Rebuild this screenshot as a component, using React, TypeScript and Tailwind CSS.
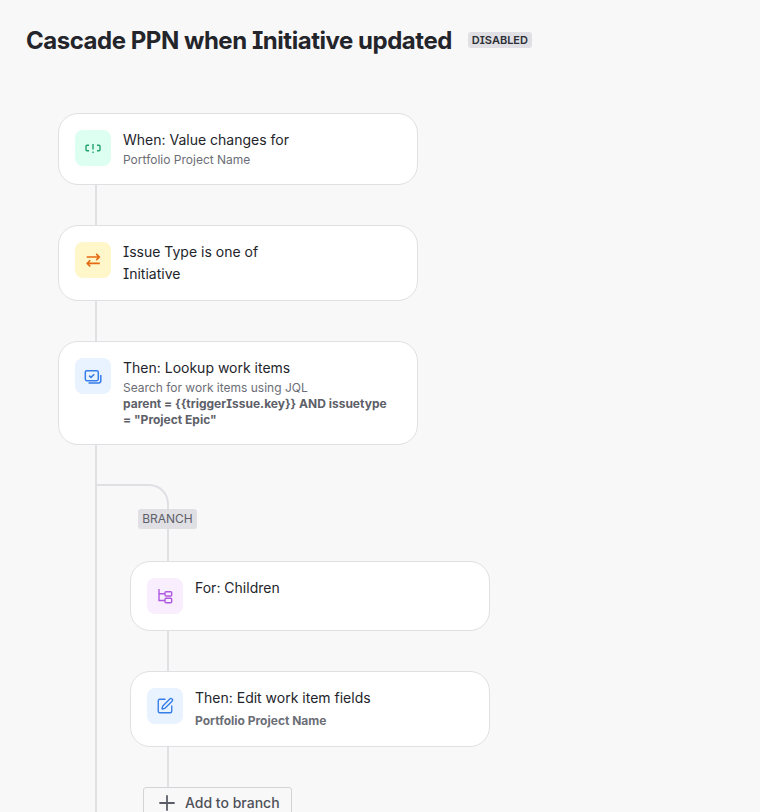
import React from "react";
import { SquarePen, Plus } from "lucide-react";

const font = { fontFamily: "Inter, 'Noto Sans', sans-serif" };

function Conn({ ml, h = "h-10" }: { ml: string; h?: string }) {
  return <div className={`w-0.5 bg-[#dfdfe4] ${ml} ${h}`} />;
}

function Card({ icon, bg, h, title, children }: { icon: React.ReactNode; bg: string; h: string; title: string; children?: React.ReactNode }) {
  return (
    <div className={`w-[360px] ${h} bg-white border border-[#e0e0e4] rounded-[20px] pl-4 pr-6 pt-4 flex gap-3`}>
      <div className={`w-9 h-9 rounded-lg ${bg} flex items-center justify-center shrink-0`}>{icon}</div>
      <div className="flex-1 min-w-0">
        <div className="text-sm leading-5 text-[#23252b]">{title}</div>
        {children}
      </div>
    </div>
  );
}

const WhenIcon = () => (
  <svg width="18" height="18" viewBox="0 0 18 18" fill="none" stroke="#22a06b" strokeWidth="1.4">
    <path d="M5 6.2H3a1 1 0 0 0-1 1v3.6a1 1 0 0 0 1 1h2" />
    <path d="M13 6.2h2a1 1 0 0 1 1 1v3.6a1 1 0 0 1-1 1h-2" />
    <path d="M9 5v5.6M9 12.4v1.6" />
  </svg>
);

const SwapIcon = () => (
  <svg width="18" height="18" viewBox="0 0 18 18" fill="none" stroke="#e56910" strokeWidth="1.6">
    <path d="M2.7 6h12.6M12.2 2.9L15.3 6l-3.1 3.1" />
    <path d="M15.8 12.4H3.2M6.3 9.3L3.2 12.4l3.1 3.1" />
  </svg>
);

const LookupIcon = () => (
  <svg width="18" height="18" viewBox="0 0 18 18" fill="none" stroke="#357de8" strokeWidth="1.5">
    <rect x="1.3" y="3.7" width="13" height="10" rx="1.6" />
    <path d="M5.2 8.6l1.8 1.8 3.2-3.2" />
    <path d="M16.8 8v5.8a2.2 2.2 0 0 1-2.2 2.2H4.5" />
  </svg>
);

const TreeIcon = () => (
  <svg width="18" height="18" viewBox="0 0 18 18" fill="none" stroke="#af59e1" strokeWidth="1.4">
    <path d="M3 2v11.5h6M3 6.8h6" />
    <rect x="9" y="4.7" width="6.7" height="4.3" rx="1" />
    <rect x="9" y="11.3" width="6.7" height="4.4" rx="1" />
  </svg>
);

const jql = 'parent = {{triggerIssue.key}} AND issuetype = "Project Epic"';

export default function App() {
  return (
    <div style={font} className="w-[760px] h-[812px] overflow-hidden bg-[#f8f8f8] text-[#23252b] [font-feature-settings:'cv08']">
      <div className="flex pl-[26px] pt-[25px] h-[113px] items-start">
        <h1 className="text-2xl leading-8 font-bold tracking-[-0.47px] text-[#23252b]">Cascade PPN when Initiative updated</h1>
        <span className="ml-4 mt-[7px] h-4 w-16 text-center rounded-[3px] bg-[#dfdfe4] text-[11px] leading-4 font-semibold text-[#2c2e35]">DISABLED</span>
      </div>

      <div className="pl-[58px]">
        <Card h="h-[72px]" bg="bg-[#dcfff1]" icon={<WhenIcon />} title="When: Value changes for">
          <div className="text-xs leading-4 mt-[2px] text-[#6b6e76]">Portfolio Project Name</div>
        </Card>
        <Conn ml="ml-[37px]" />
        <Card h="h-[76px]" bg="bg-[#fff7c9]" icon={<SwapIcon />} title="Issue Type is one of">
          <div className="text-sm leading-5 mt-[2px] text-[#23252b]">Initiative</div>
        </Card>
        <Conn ml="ml-[37px]" />
        <Card h="h-[104px]" bg="bg-[#e9f2ff]" icon={<LookupIcon />} title="Then: Lookup work items">
          <div className="text-xs leading-4 mt-[2px] text-[#6b6e76]">Search for work items using JQL</div>
          <div className="text-xs leading-4 font-bold text-[#5d6068]">{jql}</div>
        </Card>

        <div className="ml-[37px] border-l-2 border-[#dfdfe4] pt-[39px] h-[400px]">
          <div className="w-[72px] h-[25px] border-t-2 border-r-2 border-[#dfdfe4] rounded-tr-[20px]" />
          <div className="ml-[41px] w-[59px] h-5 rounded-[3px] bg-[#dfdfe4] text-xs leading-5 text-center text-[#5d6068]">BRANCH</div>
          <Conn ml="ml-[70px]" h="h-8" />
          <div className="ml-[33px]">
            <Card h="h-[70px]" bg="bg-[#f8eefe]" icon={<TreeIcon />} title="For: Children" />
            <Conn ml="ml-[37px]" />
            <Card h="h-[76px]" bg="bg-[#e9f2ff]" icon={<SquarePen size={18} color="#357de8" strokeWidth={1.8} />} title="Then: Edit work item fields">
              <div className="text-xs leading-4 mt-[5px] font-bold text-[#6b6e76]">Portfolio Project Name</div>
            </Card>
            <Conn ml="ml-[37px]" />
          </div>
          <div className="ml-[46px] w-[149px] h-8 border border-[#d4d4d8] rounded-[3px] bg-[#f8f8f8] flex items-center pl-[11px] gap-[6px] text-sm text-[#4e5159] font-medium">
            <Plus size={24} color="#5a5d65" strokeWidth={1.8} />
            <span>Add to branch</span>
          </div>
        </div>
      </div>
    </div>
  );
}
